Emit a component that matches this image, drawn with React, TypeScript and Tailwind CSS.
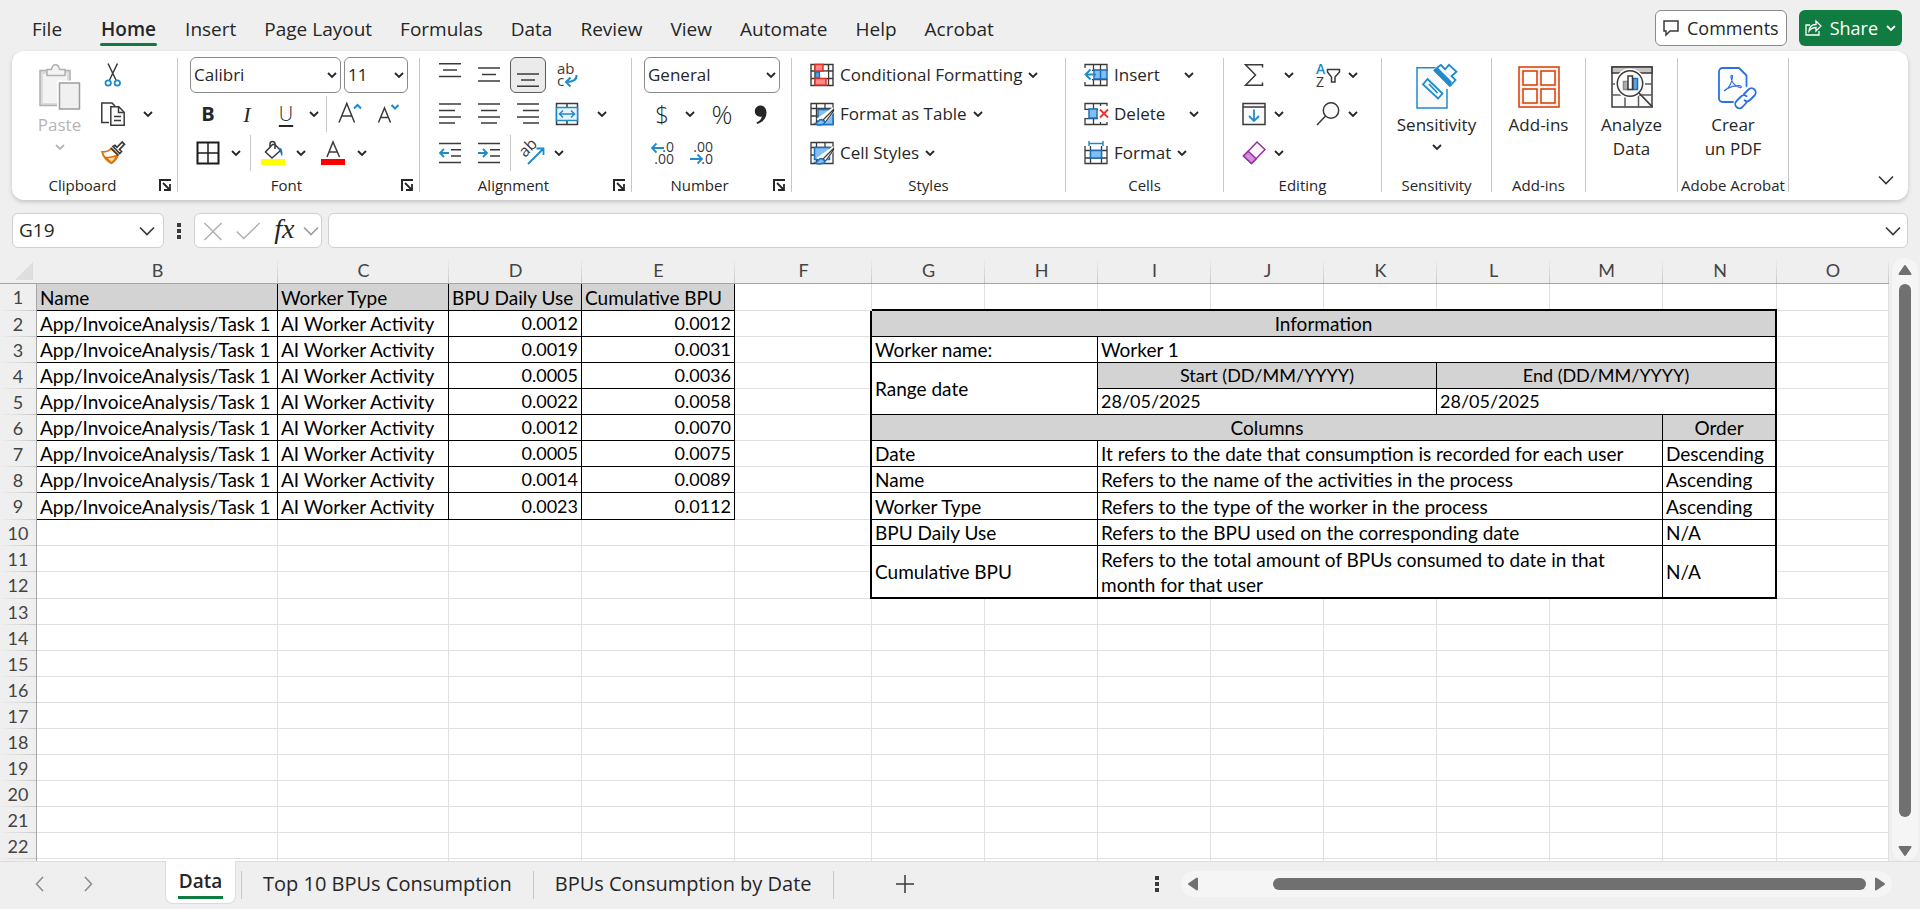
import { useState } from "react";
import type { ReactNode } from "react";
import { clsx } from "clsx";

const INK = "#3b3a39";
const BLUE = "#1e8bcd";

type Cell = {
 text: string;
 span?: number;
 rows?: number;
 fill?: boolean;
 center?: boolean;
 bottom?: boolean;
 edge?: boolean;
 date?: boolean;
};

const MENU = ["File", "Home", "Insert", "Page Layout", "Formulas", "Data", "Review", "View", "Automate", "Help", "Acrobat"];

const COLUMNS = [
 { id: "B", width: "w-[241px]" },
 { id: "C", width: "w-[171px]" },
 { id: "D", width: "w-[133px]" },
 { id: "E", width: "w-[153px]" },
 { id: "F", width: "w-[137px]" },
 { id: "G", width: "w-[113px]" },
 { id: "H", width: "w-[113px]" },
 { id: "I", width: "w-[113px]" },
 { id: "J", width: "w-[113px]" },
 { id: "K", width: "w-[113px]" },
 { id: "L", width: "w-[113px]" },
 { id: "M", width: "w-[113px]" },
 { id: "N", width: "w-[114px]" },
 { id: "O", width: "" },
];

const USAGE = [
 ["0.0012", "0.0012"],
 ["0.0019", "0.0031"],
 ["0.0005", "0.0036"],
 ["0.0022", "0.0058"],
 ["0.0012", "0.0070"],
 ["0.0005", "0.0075"],
 ["0.0014", "0.0089"],
 ["0.0023", "0.0112"],
];

// Merged cells of the G:N information block, keyed by sheet row
const INFO: Record<number, Cell[]> = {
 2: [{ text: "Information", span: 8, fill: true, center: true, edge: true }],
 3: [{ text: "Worker name:", span: 2 }, { text: "Worker 1", span: 6, edge: true }],
 4: [
  { text: "Range date", span: 2, rows: 2 },
  { text: "Start (DD/MM/YYYY)", span: 3, fill: true, center: true, date: true },
  { text: "End (DD/MM/YYYY)", span: 3, fill: true, center: true, edge: true, date: true },
 ],
 5: [
  { text: "28/05/2025", span: 3, date: true },
  { text: "28/05/2025", span: 3, edge: true, date: true },
 ],
 6: [
  { text: "Columns", span: 7, fill: true, center: true },
  { text: "Order", fill: true, center: true, edge: true },
 ],
 7: [
  { text: "Date", span: 2 },
  { text: "It refers to the date that consumption is recorded for each user", span: 5 },
  { text: "Descending", edge: true },
 ],
 8: [
  { text: "Name", span: 2 },
  { text: "Refers to the name of the activities in the process", span: 5 },
  { text: "Ascending", edge: true },
 ],
 9: [
  { text: "Worker Type", span: 2 },
  { text: "Refers to the type of the worker in the process", span: 5 },
  { text: "Ascending", edge: true },
 ],
 10: [
  { text: "BPU Daily Use", span: 2 },
  { text: "Refers to the BPU used on the corresponding date", span: 5 },
  { text: "N/A", edge: true },
 ],
 11: [
  { text: "Cumulative BPU", span: 2, rows: 2, bottom: true },
  { text: "Refers to the total amount of BPUs consumed to date in that month for that user", span: 5, rows: 2, bottom: true },
  { text: "N/A", rows: 2, bottom: true, edge: true },
 ],
 12: [],
};

const ROWS = Array.from({ length: 23 }, (_, i) => i + 1);
const TALL_ROWS = [1, 9, 12];

/* ---------- icons ---------- */

function Svg({ w = 24, h = 24, children }: { w?: number; h?: number; children: ReactNode }) {
 return (
  <svg width={w} height={h} viewBox={`0 0 ${w} ${h}`} fill="none" stroke={INK} strokeWidth="1.5" className="shrink-0 overflow-visible" aria-hidden="true">
   {children}
  </svg>
 );
}

function Chevron({ color = "#262626" }: { color?: string }) {
 return (
  <Svg w={10} h={8}>
   <path d="M1 2l4 4 4-4" stroke={color} strokeWidth="1.8" />
  </Svg>
 );
}

function WideChevron({ color = INK }: { color?: string }) {
 return (
  <Svg w={16} h={10}>
   <path d="M1 1.5l7 7 7-7" stroke={color} strokeWidth="1.7" />
  </Svg>
 );
}

function Lines({ rows }: { rows: number[][] }) {
 return (
  <Svg>
   {rows.map(([x1, x2, y]) => (
    <path key={y} d={`M${x1} ${y}H${x2}`} />
   ))}
  </Svg>
 );
}

const PasteIcon = () => (
 <Svg w={42} h={46}>
  <rect x="1" y="6.5" width="30" height="35" fill="#dcdcdc" stroke="#b0b0b0" />
  <rect x="4" y="10" width="24" height="29" fill="#f3f3f3" stroke="none" />
  <path d="M8 11.5V5.5h4.500c.5-3 2.500-4.700 4-4.700s3.500 1.700 4 4.700H26v6z" fill="#f3f3f3" stroke="#b0b0b0" />
  <rect x="18" y="16.500" width="24" height="30" fill="#fff" stroke="none" />
  <rect x="20.500" y="19" width="20" height="26" fill="#f0f0f0" stroke="#9d9d9d" />
 </Svg>
);

const CutIcon = () => (
 <Svg>
  <path d="M7 0.500L15 17M16.500 0.500L8.500 17" />
  <circle cx="7.200" cy="20" r="2.700" stroke={BLUE} strokeWidth="1.800" />
  <circle cx="16.300" cy="20" r="2.700" stroke={BLUE} strokeWidth="1.800" />
 </Svg>
);

const CopyIcon = () => (
 <Svg>
  <path d="M8 20.500H.8V1H11l3 3" />
  <path d="M9.800 4.800h8l5.400 5.400v13H9.800z" fill="#fafafa" />
  <path d="M17.500 5v5.500H23M13 14.500h7M13 18.500h7" />
 </Svg>
);

const BrushIcon = () => (
 <Svg>
  <path d="M10 7.500C7.500 10.500 4.500 11 1.200 11c1 4 4 8.500 9.300 11.300C13.500 20 16 17.500 16.800 14.200z" fill="#fff" stroke="#e07000" strokeWidth="1.800" />
  <path d="M5 16.500c3.500.3 7-.5 11-2-1 3-3 5.500-5.500 7.500z" fill="#fad9a8" stroke="#e07000" />
  <path d="M10 7l7.500 7.500M12 5.500l2-1.200 2 2L21.200 1 23.500 3.200l-5 5.300 2 2-1.800 2z" fill="#fff" strokeWidth="1.700" />
 </Svg>
);

const BordersIcon = () => (
 <Svg>
  <rect x="1.500" y="1.500" width="21" height="21" stroke="#1b1b1b" strokeWidth="2" fill="#fafafa" />
  <path d="M12 1.500v21M1.500 12h21" stroke="#1b1b1b" />
 </Svg>
);

const BucketIcon = () => (
 <Svg>
  <path d="M11.500 3.500L4.500 11l6.500 6 8.500-7.500-5.500-6zM9 7V3a2.500 2.500 0 0 1 5 0v5" />
  <path d="M17 6.500c4 0 5 3 4.200 9-2-2-1.500-5-3-6.500" fill="#1a6fc0" stroke="none" />
  <path d="M0 18h24v6H0z" fill="#ffff00" stroke="none" />
 </Svg>
);

const FontColorIcon = () => (
 <Svg>
  <path d="M6 16L12 1 18.500 16M8.200 11h8" />
  <path d="M0 18h24v6H0z" fill="#ff0000" stroke="none" />
 </Svg>
);

const GrowFontIcon = ({ small }: { small?: boolean }) => (
 <Svg>
  {small ? (
   <>
    <path d="M1.500 20.500L7.500 6l6 14.500M3.500 15.500h8" />
    <path d="M14.500 3l3.500 3.500L21.500 3" stroke={BLUE} strokeWidth="2" />
   </>
  ) : (
   <>
    <path d="M1 20.500L8.800 1.500l7.700 19M3.700 14h10" />
    <path d="M16 6.500L19.500 3 23 6.500" stroke={BLUE} strokeWidth="2" />
   </>
  )}
 </Svg>
);

const WrapIcon = () => (
 <Svg>
  <text x="2" y="11" fontSize="15" fill={INK} stroke="none">ab</text>
  <text x="2" y="22.500" fontSize="15" fill={INK} stroke="none">c</text>
  <path d="M21.500 12c.5 4.500-3 7-10 7M15.500 14.500L11 19l4.500 4.500" stroke={BLUE} strokeWidth="2" />
 </Svg>
);

const MergeIcon = () => (
 <Svg>
  <path d="M1.500 1.500h21v21h-21zM12 1v5M12 18v5" />
  <rect x="1.500" y="5.500" width="21" height="13" fill="#eaf4fb" stroke={BLUE} />
  <path d="M4.500 12h15M8 8.500L4.500 12 8 15.500M16 8.500l3.500 3.500-3.500 3.500" stroke={BLUE} />
 </Svg>
);

const IndentIcon = ({ right }: { right?: boolean }) => (
 <Svg>
  <path d="M1 2.500h22M13 8.800h10M13 15h10M1 21.500h22" />
  {right ? <path d="M1 12h9M6 8l4 4-4 4" stroke={BLUE} strokeWidth="1.800" /> : <path d="M11 12H2M6 8l-4 4 4 4" stroke={BLUE} strokeWidth="1.800" />}
 </Svg>
);

const OrientIcon = () => (
 <Svg>
  <text x="5" y="17" fontSize="16" fill={INK} stroke="none" transform="rotate(-45 5 17)">ab</text>
  <path d="M8 23L23 8M16.500 7.500H23.500V14" stroke={BLUE} strokeWidth="1.800" />
 </Svg>
);

const DecimalIcon = ({ less }: { less?: boolean }) => (
 <Svg>
  <text x="24" y="11" fontSize="14" textAnchor="end" fill={INK} stroke="none">{less ? ".00" : ".0"}</text>
  <text x="24" y="23" fontSize="14" textAnchor="end" fill={INK} stroke="none">{less ? ".0" : ".00"}</text>
  {less ? <path d="M1 18h12M8.500 13.500L13 18l-4.500 4.500" stroke={BLUE} strokeWidth="1.800" /> : <path d="M14 7H2M6.500 2.500L2 7l4.500 4.500" stroke={BLUE} strokeWidth="1.800" />}
 </Svg>
);

const CommaIcon = () => (
 <Svg>
  <path d="M11.500 3.500c3.500 0 6 2.600 6 7 0 6-4 10-9.500 11.500l-.5-1.500c3.200-1.400 5-3.400 5.300-6-4 .9-7-1.600-7-5.200 0-3.300 2.500-5.800 5.700-5.800z" fill="#262626" stroke="none" />
 </Svg>
);

const CondFormatIcon = () => (
 <Svg>
  <path d="M1 1.500h22v21H1zM1 8h22M1 15.500h22M5 1v22M18.500 1v22" strokeWidth="1.400" />
  <path d="M5.500 9h4v6h-4z" fill="#5ba6e0" stroke="#1a6fc0" />
  <path d="M10.500 8.800h7.500v6h-7.500z" fill="#fff" stroke="none" />
  <path d="M5 1.500h8v6.500H5zM5 15.500h11v6.500H5z" fill="#ff8a8a" stroke="#e0302a" />
 </Svg>
);

const TableIcon = ({ plain }: { plain?: boolean }) => (
 <Svg>
  <path d="M1 1.500h22v21H1zM1 6.500h22M6.500 1v21M1 14h7M15 1v6" strokeWidth="1.300" />
  <path d={plain ? "M4.500 6.500h15v12h-15z" : "M8 7.500h15v15H8z"} fill="#83beec" stroke="#1a6fc0" />
  <path d="M24 7L14 19.500 10 17z" fill="#fff" stroke="#fff" strokeWidth="4" />
  <path d="M23.500 7.500L13 18l2.500 2L23.500 9z" fill="#fff" strokeWidth="1.200" />
  <path d="M11.500 17.500c-4 0-3 4-6.500 4 2.500 2.500 10 1.500 10-1.500z" fill="#83beec" stroke="#1a6fc0" />
 </Svg>
);

const CellsIcon = ({ kind }: { kind: "insert" | "delete" | "format" }) => (
 <Svg>
  {kind === "format" ? (
   <>
    <path d="M1 5v17.500h22V5M1 9.500h22M1 17h22M6.500 5v18M17.500 5v18" strokeWidth="1.300" />
    <path d="M6.500 9.500h11v7.500h-11z" fill="#83beec" stroke="#1a6fc0" />
    <path d="M5 2.500h14M5 0v5M19 0v5" stroke={BLUE} />
   </>
  ) : (
   <>
    <path d="M1 1.500h22v21H1zM1 7.500h22M1 16.500h22M9.500 1v6M16.500 1v6M9.500 17v6M16.500 17v6" strokeWidth="1.300" />
    <path d="M0 8h24v8H0z" fill="#fff" stroke="none" />
    {kind === "insert" ? (
     <>
      <path d="M10 7h13v9H10zM16.500 7v9" fill="#83beec" stroke="#1a6fc0" />
      <path d="M0 5h8v14H0z" fill="#fff" stroke="none" />
      <path d="M12 11.500H1.500M6.500 6.500l-5 5 5 5" stroke={BLUE} strokeWidth="1.800" />
     </>
    ) : (
     <>
      <path d="M5 7h8v9H5z" fill="#83beec" stroke="#1a6fc0" />
      <path d="M14 4h10v16H14z" fill="#fff" stroke="none" />
      <path d="M16 7.500l8 8M24 7.500l-8 8" stroke="#f03030" strokeWidth="1.800" />
     </>
    )}
   </>
  )}
 </Svg>
);

const SigmaIcon = () => (
 <Svg>
  <path d="M20.500 4.500V1.800H3.500L13.500 12 3.500 22.200h17V19.500" />
 </Svg>
);

const FillDownIcon = () => (
 <Svg>
  <path d="M1 1.500h22v21H1zM1 5h22" fill="#fafafa" />
  <path d="M12 7.500V19M7 14l5 5 5-5" stroke={BLUE} strokeWidth="1.800" />
 </Svg>
);

const EraserIcon = () => (
 <Svg>
  <path d="M15 1l8 7.500L9.500 22.500 1.500 15z" stroke="#9332a0" fill="#fdf8fd" />
  <path d="M6.200 10.200l8 7.500L9.500 22.500 1.500 15z" fill="#d68fdc" stroke="#9332a0" />
 </Svg>
);

const SortIcon = () => (
 <Svg>
  <text x="0" y="11" fontSize="14" fontWeight="600" fill={BLUE} stroke="none">A</text>
  <text x="0" y="24" fontSize="14" fill={INK} stroke="none">Z</text>
  <path d="M11.500 6.500h12v2.500l-4.500 5v5h-3.500v-5l-4-5z" />
 </Svg>
);

const FindIcon = () => (
 <Svg>
  <circle cx="15" cy="8.500" r="7.700" fill="#fafafa" />
  <path d="M9.500 14L1 23" />
 </Svg>
);

const SensitivityIcon = () => (
 <Svg w={42} h={46}>
  <path d="M31 25v19H1V3.800h22" fill="#fafafa" stroke={BLUE} />
  <path d="M24 .5l-7 8.500 15 14 8-9" fill="#fff" stroke="#fff" strokeWidth="3" />
  <path d="M22 3l3-2 14.500 15-5 5.500L18.500 6.500z" fill="#fff" stroke={BLUE} strokeWidth="1.800" />
  <path d="M18.500 6.500l3.500-1.500 13 13-1.500 4z" fill={BLUE} stroke={BLUE} />
  <path d="M28.500 6L33 .8l7.500 7L35 12.500" fill="#fff" stroke={BLUE} strokeWidth="1.800" />
  <path d="M11.500 15l15 14.500-4.500 5L7 20.500zM13 20l8.500 9" stroke={BLUE} strokeWidth="1.800" />
 </Svg>
);

const AddInsIcon = () => (
 <Svg w={42} h={42}>
  <g stroke="#d83b01">
   <path d="M1 1h40v40H1z" fill="#fef3ee" />
   <path d="M5 5h14v14H5zM23 5h14v14H23zM5 23h14v14H5zM23 23h14v14H23z" fill="#fff" />
  </g>
 </Svg>
);

const AnalyzeIcon = () => (
 <Svg w={42} h={42}>
  <path d="M1 1h40v40H1z" fill="#fafafa" />
  <path d="M1 1h40v6H1z" fill="#c8c6c4" />
  <path d="M1 18h40M1 29h40M14 29v12M27.500 29v12" stroke="#5c5c5c" />
  <circle cx="19" cy="17.500" r="15" fill="#fff" stroke="none" />
  <circle cx="19" cy="17.500" r="12.700" fill="#fafafa" />
  <path d="M28 27l13.500 14" strokeWidth="1.800" />
  <path d="M12.500 15.500H17v8h-4.500z" fill="#b0b0b0" stroke="#888" />
  <path d="M22 12.500h4.500v11H22z" fill="#5ba6e0" stroke="#1a6fc0" />
  <path d="M17 10h4.500v13.500H17z" fill="#fff" />
 </Svg>
);

const PdfIcon = () => (
 <Svg w={50} h={42}>
  <g stroke="#2f6fe4" strokeWidth="1.800" strokeLinecap="round" strokeLinejoin="round">
   <path d="M25 36H14.500A3.500 3.500 0 0 1 11 32.500v-27A3.500 3.500 0 0 1 14.500 2H31l7.500 7.500V20" />
   <path d="M17 24.500c4-2 7-8 7.500-13.500.3-2.500-2-2-1.500.5.700 4.500 4 8.500 8.500 10 2.500.5 2.500-1.800-.5-1.800-4 0-9 1.300-12.500 3.300-2.500 1.500-2.500 2-1.500 1.500z" strokeWidth="1.200" />
   <path d="M36 28l4.500-4.500a4.200 4.200 0 0 1 6 6L42 34a4.200 4.200 0 0 1-5.500.3" />
   <path d="M39 36l-4.500 5a4.200 4.200 0 0 1-6-6l4.500-4.500a4.200 4.200 0 0 1 5.500-.3" />
  </g>
 </Svg>
);

const LauncherIcon = () => (
 <Svg w={12} h={12}>
  <path d="M1 12V1h11" stroke="#262626" strokeWidth="2" />
  <path d="M4 4l6.500 6.500M11 5v6H5" stroke="#262626" strokeWidth="1.800" />
 </Svg>
);

const Dots = () => (
 <Svg w={4} h={16}>
  <path d="M0 0h4v4H0zM0 6h4v4H0zM0 12h4v4H0z" fill={INK} stroke="none" />
 </Svg>
);

/* ---------- ribbon pieces ---------- */

function Tool({ label, width = "w-9", active, children }: { label: string; width?: string; active?: boolean; children: ReactNode }) {
 return (
  <button
   type="button"
   aria-label={label}
   className={clsx("flex h-9 shrink-0 items-center justify-center rounded-md", width, active && "border border-[#5c5c5c] bg-[#ebebeb]")}
  >
   {children}
  </button>
 );
}

const More = ({ label, width = "w-5" }: { label: string; width?: string }) => (
 <Tool label={`${label} options`} width={width}>
  <Chevron />
 </Tool>
);

const Rule = ({ margin }: { margin?: string }) => <span className={clsx("h-9 w-px shrink-0 bg-[#c8c8c8]", margin)} />;

const Row = ({ children, gap = "gap-[3px]" }: { children: ReactNode; gap?: string }) => <div className={clsx("flex h-9 items-center", gap)}>{children}</div>;

function Group({ name, width, launcher, children }: { name: string; width: string; launcher?: boolean; children: ReactNode }) {
 return (
  <section aria-label={name} className={clsx("flex shrink-0", width)}>
   <div className="flex min-w-0 flex-1 flex-col">
    <div className="h-[116px]">{children}</div>
    <div className="flex h-6 items-center text-[15px] whitespace-nowrap">
     <span className="flex-1 text-center">{name}</span>
     {launcher && (
      <button type="button" aria-label={`${name} settings`} className="flex w-6 justify-center">
       <LauncherIcon />
      </button>
     )}
    </div>
   </div>
   <span className="mt-px h-[134px] w-px bg-[#c8c8c8]" />
  </section>
 );
}

function Combo({ label, options, width }: { label: string; options: string[]; width: string }) {
 return (
  <div className={clsx("relative h-9", width)}>
   <select aria-label={label} className="h-full w-full appearance-none rounded-md border border-[#8a8a8a] bg-white pl-[3px] text-[17px] text-[#262626]">
    {options.map((o) => (
     <option key={o}>{o}</option>
    ))}
   </select>
   <span className="pointer-events-none absolute top-[14px] right-1">
    <Chevron />
   </span>
  </div>
 );
}

function Command({ icon, text, split }: { icon: ReactNode; text: string; split?: boolean }) {
 return (
  <button type="button" className={clsx("flex h-9 items-center text-[17px] whitespace-nowrap", split ? "gap-6" : "gap-1.5")}>
   <span className="flex items-center gap-1.5">
    {icon}
    {text}
   </span>
   <Chevron />
  </button>
 );
}

function BigButton({ icon, lines, chevron, disabled }: { icon: ReactNode; lines: string[]; chevron?: boolean; disabled?: boolean }) {
 return (
  <button type="button" disabled={disabled} className={clsx("flex w-full flex-col items-center pt-1 text-[17px] leading-6", disabled && "text-[#b5b5b5]")}>
   <span className="flex h-[52px] items-center">{icon}</span>
   {lines.map((l) => (
    <span key={l}>{l}</span>
   ))}
   {chevron && (
    <span className="flex h-5 items-center">
     <Chevron color={disabled ? "#b5b5b5" : "#262626"} />
    </span>
   )}
  </button>
 );
}

function Ribbon() {
 return (
  <div className="mx-3 flex overflow-hidden rounded-xl bg-white pt-1.5 pb-[3px] shadow-[0_2px_4px_rgba(0,0,0,0.18)]">
   <Group name="Clipboard" width="w-[166px]" launcher>
    <div className="flex pl-3">
     <div className="w-[71px]">
      <BigButton icon={<PasteIcon />} lines={["Paste"]} chevron disabled />
     </div>
     <div className="flex flex-col gap-[3px]">
      <Tool label="Cut"><CutIcon /></Tool>
      <Row gap="gap-[7px]">
       <Tool label="Copy"><CopyIcon /></Tool>
       <More label="Copy" />
      </Row>
      <Tool label="Format Painter"><BrushIcon /></Tool>
     </div>
    </div>
   </Group>

   <Group name="Font" width="w-[242px]" launcher>
    <div className="flex flex-col gap-[3px] pl-3">
     <Row>
      <Combo label="Font name" options={["Calibri", "Arial"]} width="w-[151px]" />
      <Combo label="Font size" options={["11", "12"]} width="w-16" />
     </Row>
     <Row>
      <Tool label="Bold"><span className="text-xl font-bold">B</span></Tool>
      <Tool label="Italic"><span className="font-['Liberation_Serif',serif] text-[22px] italic">I</span></Tool>
      <Tool label="Underline"><span className="text-xl font-light underline underline-offset-4">U</span></Tool>
      <More label="Underline" width="w-3.5" />
      <Rule margin="mx-0.5" />
      <Tool label="Increase font size"><GrowFontIcon /></Tool>
      <Tool label="Decrease font size"><GrowFontIcon small /></Tool>
     </Row>
     <Row gap="gap-0">
      <Tool label="Borders"><BordersIcon /></Tool>
      <More label="Borders" />
      <Rule margin="mx-1" />
      <Tool label="Fill color"><BucketIcon /></Tool>
      <More label="Fill color" />
      <Tool label="Font color" width="w-11"><FontColorIcon /></Tool>
      <More label="Font color" width="w-3.5" />
     </Row>
    </div>
   </Group>

   <Group name="Alignment" width="w-[212px]" launcher>
    <div className="flex flex-col gap-[3px] pl-3">
     <Row>
      <Tool label="Top align"><Lines rows={[[1, 23, 0.8], [5, 19, 7], [1, 23, 13.5]]} /></Tool>
      <Tool label="Middle align"><Lines rows={[[1, 23, 5], [5, 19, 11.5], [1, 23, 18]]} /></Tool>
      <Tool label="Bottom align" active><Lines rows={[[1, 23, 11], [5, 19, 17], [1, 23, 23.2]]} /></Tool>
      <Tool label="Wrap text"><WrapIcon /></Tool>
     </Row>
     <Row>
      <Tool label="Align left"><Lines rows={[[1, 23, 2], [1, 17, 8.5], [1, 23, 15], [1, 17, 21]]} /></Tool>
      <Tool label="Center"><Lines rows={[[1, 23, 2], [4, 20, 8.5], [1, 23, 15], [4, 20, 21]]} /></Tool>
      <Tool label="Align right"><Lines rows={[[1, 23, 2], [7, 23, 8.5], [1, 23, 15], [7, 23, 21]]} /></Tool>
      <Tool label="Merge and center"><MergeIcon /></Tool>
      <More label="Merge" width="w-7" />
     </Row>
     <Row>
      <Tool label="Decrease indent"><IndentIcon /></Tool>
      <Tool label="Increase indent"><IndentIcon right /></Tool>
      <Rule />
      <Tool label="Orientation"><OrientIcon /></Tool>
      <More label="Orientation" width="w-3" />
     </Row>
    </div>
   </Group>

   <Group name="Number" width="w-[160px]" launcher>
    <div className="flex flex-col gap-[3px] pl-3">
     <Combo label="Number format" options={["General", "Number"]} width="w-[136px]" />
     <Row>
      <Tool label="Accounting format"><span className="text-2xl font-light">$</span></Tool>
      <More label="Accounting format" width="w-3.5" />
      <Tool label="Percent style" width="w-11"><span className="text-[26px] font-light">%</span></Tool>
      <Tool label="Comma style" width="w-7"><CommaIcon /></Tool>
     </Row>
     <Row>
      <Tool label="Increase decimal"><DecimalIcon /></Tool>
      <Tool label="Decrease decimal"><DecimalIcon less /></Tool>
     </Row>
    </div>
   </Group>

   <Group name="Styles" width="w-[274px]">
    <div className="flex flex-col items-start gap-[3px] pl-[18px]">
     <Command icon={<CondFormatIcon />} text="Conditional Formatting" />
     <Command icon={<TableIcon />} text="Format as Table" />
     <Command icon={<TableIcon plain />} text="Cell Styles" />
    </div>
   </Group>

   <Group name="Cells" width="w-[158px]">
    <div className="flex flex-col items-start gap-[3px] pl-[18px]">
     <Command icon={<CellsIcon kind="insert" />} text="Insert" split />
     <Command icon={<CellsIcon kind="delete" />} text="Delete" split />
     <Command icon={<CellsIcon kind="format" />} text="Format" />
    </div>
   </Group>

   <Group name="Editing" width="w-[158px]">
    <div className="flex gap-3 pl-3">
     <div className="flex flex-col gap-[3px]">
      <Row gap="gap-2">
       <Tool label="AutoSum"><SigmaIcon /></Tool>
       <More label="AutoSum" width="w-[18px]" />
      </Row>
      <Row gap="gap-0">
       <Tool label="Fill"><FillDownIcon /></Tool>
       <More label="Fill" width="w-[14px]" />
      </Row>
      <Row gap="gap-0">
       <Tool label="Clear"><EraserIcon /></Tool>
       <More label="Clear" width="w-[14px]" />
      </Row>
     </div>
     <div className="flex flex-col gap-[3px]">
      <Row gap="gap-0">
       <Tool label="Sort and filter"><SortIcon /></Tool>
       <More label="Sort and filter" width="w-[14px]" />
      </Row>
      <Row gap="gap-0">
       <Tool label="Find and select"><FindIcon /></Tool>
       <More label="Find and select" width="w-[14px]" />
      </Row>
     </div>
    </div>
   </Group>

   <Group name="Sensitivity" width="w-[110px]">
    <BigButton icon={<SensitivityIcon />} lines={["Sensitivity"]} chevron />
   </Group>
   <Group name="Add-ins" width="w-[94px]">
    <BigButton icon={<AddInsIcon />} lines={["Add-ins"]} />
   </Group>
   <Group name="" width="w-[92px]">
    <BigButton icon={<AnalyzeIcon />} lines={["Analyze", "Data"]} />
   </Group>
   <Group name="Adobe Acrobat" width="w-[111px]">
    <BigButton icon={<PdfIcon />} lines={["Crear", "un PDF"]} />
   </Group>

   <div className="flex flex-1 items-end justify-end pr-3 pb-2.5">
    <button type="button" aria-label="Collapse ribbon" className="p-0.5">
     <WideChevron />
    </button>
   </div>
  </div>
 );
}

function TopBar() {
 return (
  <header className="flex h-[51px] items-center justify-between pr-[18px] pl-[18px]">
   <nav className="flex pt-[9px]">
    {MENU.map((item) => (
     <a key={item} href="#" className={clsx("flex flex-col items-center px-3.5 text-[19px] leading-7 whitespace-nowrap", item === "File" && "mr-2.5", item === "Home" && "font-semibold")}>
      {item}
      <span className={clsx("h-[3px] w-[57px] rounded-full", item === "Home" ? "bg-[#107c41]" : "hidden")} />
     </a>
    ))}
   </nav>
   <div className="flex gap-3 pt-1">
    <button type="button" className="flex h-9 items-center gap-2 rounded-md border border-[#8a8a8a] bg-white px-[7px] text-lg">
     <Svg w={16} h={16}>
      <path d="M1 1h14v10H7l-4 4v-4H1z" />
     </Svg>
     Comments
    </button>
    <button type="button" className="flex h-9 items-center gap-2 rounded-md bg-[#107c41] px-1.5 text-lg font-medium text-white">
     <Svg w={17} h={17}>
      <path d="M5 6H1v10h13v-4M4 12c.5-4.500 3-6.500 7-6.500V2l5 5-5 5V8.500c-3 0-5 1-7 3.500z" stroke="#fff" strokeWidth="1.300" />
     </Svg>
     Share
     <Chevron color="#fff" />
    </button>
   </div>
  </header>
 );
}

function FormulaBar() {
 return (
  <div className="mx-3 mt-[13px] flex h-[35px] items-center">
   <div className="flex h-full w-[152px] items-center rounded-md border border-[#d0d0d0] bg-white pr-2 pl-1.5">
    <input aria-label="Name box" defaultValue="G19" className="min-w-0 flex-1 text-[19px] outline-none" />
    <WideChevron />
   </div>
   <div className="flex w-[30px] justify-center">
    <Dots />
   </div>
   <div className="flex h-full w-32 items-center justify-between rounded-md border border-[#d0d0d0] bg-white pr-0.5 pl-2">
    <button type="button" aria-label="Cancel">
     <Svg w={20} h={20}>
      <path d="M1.500 2l17 17M18.500 2l-17 17" stroke="#b0b0b0" />
     </Svg>
    </button>
    <button type="button" aria-label="Enter" className="ml-1">
     <Svg w={24} h={20}>
      <path d="M.8 10.500l7 7L23.500 2" stroke="#b0b0b0" />
     </Svg>
    </button>
    <button type="button" aria-label="Insert function" className="ml-1.5 pb-1 font-['Liberation_Serif',serif] text-[28px] leading-7 text-[#262626] italic">fx</button>
    <WideChevron color="#9d9d9d" />
   </div>
   <div className="ml-1.5 flex h-full flex-1 items-center rounded-md border border-[#d0d0d0] bg-white pr-1.5 pl-2">
    <input aria-label="Formula bar" className="min-w-0 flex-1 text-lg outline-none" />
    <WideChevron />
   </div>
  </div>
 );
}

/* ---------- sheet ---------- */

const GRID = "border-r border-b border-r-[#e0e0e0] border-b-[#e0e0e0]";
const BOX = "border-r border-b border-black";

function DataCells({ row }: { row: number }) {
 if (row === 1) {
  return ["Name", "Worker Type", "BPU Daily Use", "Cumulative BPU"].map((t) => (
   <td key={t} className={clsx(BOX, "bg-[#d3d3d3] pl-[3px]")}>{t}</td>
  ));
 }
 const usage = USAGE[row - 2];
 if (!usage) {
  return ["B", "C", "D", "E"].map((c) => <td key={c} className={GRID} />);
 }
 return (
  <>
   <td className={clsx(BOX, "pl-[3px]")}>App/InvoiceAnalysis/Task 1</td>
   <td className={clsx(BOX, "pl-[3px]")}>AI Worker Activity</td>
   <td className={clsx(BOX, "pr-[3px] text-right text-[18px]")}>{usage[0]}</td>
   <td className={clsx(BOX, "pr-[3px] text-right text-[18px]")}>{usage[1]}</td>
  </>
 );
}

function InfoCells({ row }: { row: number }) {
 const cells = INFO[row];
 if (!cells) {
  return ["G", "H", "I", "J", "K", "L", "M", "N"].map((c) => (
   <td
    key={c}
    className={row === 1 ? "border-b-2 border-black bg-[linear-gradient(#e0e0e0,#e0e0e0)] bg-[length:1px_100%] bg-right bg-no-repeat" : GRID}
   />
  ));
 }
 return cells.map((c, i) => (
  <td
   key={i}
   colSpan={c.span}
   rowSpan={c.rows}
   className={clsx(
    "border-black",
    c.edge ? "border-r-2" : "border-r",
    c.bottom ? "border-b-2" : "border-b",
    c.fill && "bg-[#d3d3d3]",
    c.center ? "text-center" : "pl-[3px]",
    c.date && "text-[18px]",
    c.rows && c.span === 5 ? "pr-8 whitespace-normal" : "whitespace-nowrap"
   )}
  >
   {c.text}
  </td>
 ));
}

function Sheet() {
 return (
  <table className="w-full table-fixed border-separate border-spacing-0 font-[Lato,Carlito,sans-serif] text-[19px] leading-[25px] whitespace-nowrap text-black">
   <colgroup>
    <col className="w-[37px]" />
    {COLUMNS.map((c) => (
     <col key={c.id} className={c.width} />
    ))}
   </colgroup>
   <thead>
    <tr className="h-[26px] text-[18px] text-[#444]">
     <th className="border-b border-[#a6a6a6]" aria-label="Select all">
      <svg width="18" height="18" viewBox="0 0 18 18" className="ml-[15px]" aria-hidden="true">
       <path d="M18 0v18H0z" fill="#dedede" />
      </svg>
     </th>
     {COLUMNS.map((c) => (
      <th
       key={c.id}
       scope="col"
       className="border-b border-[#a6a6a6] bg-[linear-gradient(to_bottom,#efefef,#c8c8c8)] bg-[length:1px_100%] bg-right bg-no-repeat font-normal"
      >
       {c.id}
      </th>
     ))}
    </tr>
   </thead>
   <tbody>
    {ROWS.map((row) => (
     <tr key={row} className={clsx("bg-white", TALL_ROWS.includes(row) ? "h-[27px]" : "h-[26px]")}>
      <th
       scope="row"
       className="border-r border-[#a6a6a6] bg-[#efefef] bg-[linear-gradient(to_right,#efefef,#c8c8c8)] bg-[length:100%_1px] bg-bottom bg-no-repeat text-center text-[18px] font-normal text-[#444]"
      >
       {row}
      </th>
      <DataCells row={row} />
      <td className={INFO[row] ? "border-r-2 border-black bg-[linear-gradient(#e0e0e0,#e0e0e0)] bg-[length:100%_1px] bg-bottom bg-no-repeat" : GRID} />
      <InfoCells row={row} />
      <td className={GRID} />
     </tr>
    ))}
   </tbody>
  </table>
 );
}

function Arrow({ dir }: { dir: "up" | "down" | "left" | "right" }) {
 const paths = {
  up: "M7 2l5.500 8h-11z",
  down: "M7 12L1.500 4h11z",
  left: "M2 7l8-5.500v11z",
  right: "M12 7L4 1.500v11z",
 };
 return (
  <button type="button" aria-label={`Scroll ${dir}`} className="shrink-0">
   <svg width="14" height="14" viewBox="0 0 14 14" className="block" aria-hidden="true">
    <path d={paths[dir]} fill="#707070" stroke="#707070" strokeWidth="2" strokeLinejoin="round" />
   </svg>
  </button>
 );
}

const SHEETS = ["Data", "Top 10 BPUs Consumption", "BPUs Consumption by Date"];

function SheetTabs() {
 const [active, setActive] = useState("Data");
 return (
  <footer className="flex h-12 border-t border-[#dcdcdc]">
   <div className="flex w-[165px] items-center gap-10 pb-1 pl-[35px]">
    <button type="button" aria-label="Previous sheet">
     <Svg w={9} h={16}><path d="M8 1L1.500 8 8 15" stroke="#8a8a8a" /></Svg>
    </button>
    <button type="button" aria-label="Next sheet">
     <Svg w={9} h={16}><path d="M1 1l6.500 7L1 15" stroke="#8a8a8a" /></Svg>
    </button>
   </div>
   <div role="tablist" className="flex">
    {SHEETS.map((name) =>
     name === active ? (
      <div key={name} className="flex">
       <button type="button" role="tab" aria-selected="true" className="-mt-px flex h-[43px] flex-col items-center rounded-b-lg border border-t-0 border-[#dcdcdc] bg-white px-3 pt-1.5 text-[19px] leading-7 font-semibold">
        {name}
        <span className="mt-px h-[3px] w-[45px] bg-[#107c41]" />
       </button>
       <span className="mt-[9px] ml-[5px] h-7 w-px bg-[#c8c8c8]" />
      </div>
     ) : (
      <div key={name} className="flex">
       <button type="button" role="tab" aria-selected="false" onClick={() => setActive(name)} className="h-12 px-[21px] pb-1 text-xl">
        {name}
       </button>
       <span className="mt-[9px] h-7 w-px bg-[#c8c8c8]" />
      </div>
     )
    )}
   </div>
   <button type="button" aria-label="New sheet" className="ml-[62px] pb-1">
    <Svg w={18} h={18}><path d="M9 0v18M0 9h18" /></Svg>
   </button>
   <div className="ml-auto flex items-center gap-[22px] pr-7 pb-[3px]">
    <Dots />
    <div className="flex h-[26px] w-[711px] items-center rounded-full bg-[#f5f5f5] px-1.5">
     <Arrow dir="left" />
     <div className="mx-1.5 flex flex-1 justify-end">
      <div className="h-3 w-[90%] rounded-full bg-[#707070]" />
     </div>
     <Arrow dir="right" />
    </div>
   </div>
  </footer>
 );
}

export default function App() {
 return (
  <div className="flex h-screen flex-col overflow-hidden bg-[#efefef] font-['Open_Sans','Segoe_UI',sans-serif] text-[#262626]">
   <TopBar />
   <Ribbon />
   <FormulaBar />
   <main className="mt-2.5 flex min-h-0 flex-1">
    <div className="min-w-0 flex-1 overflow-hidden">
     <Sheet />
    </div>
    <div className="mr-0.5 ml-[3px] flex w-[26px] flex-col items-center rounded-full bg-[#f5f5f5] pt-1.5 pb-1">
     <Arrow dir="up" />
     <div className="mt-1.5 mb-1 flex w-3 flex-1 flex-col">
      <div className="h-[96%] rounded-full bg-[#707070]" />
     </div>
     <Arrow dir="down" />
    </div>
   </main>
   <SheetTabs />
  </div>
 );
}
